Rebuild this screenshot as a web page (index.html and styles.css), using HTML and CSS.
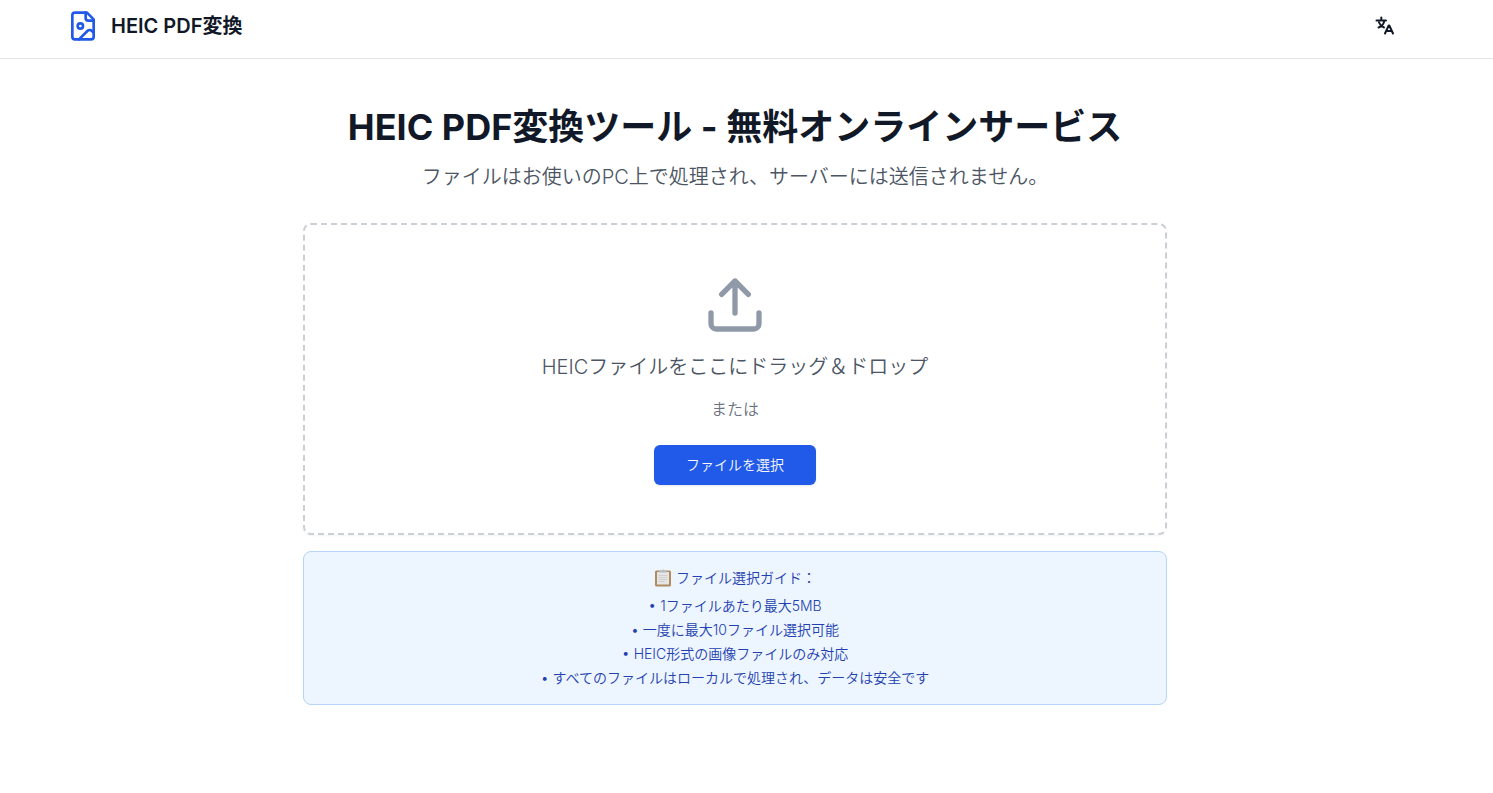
FILE: index.html
```
<!DOCTYPE html>
<html lang="ja">
<head>
    <meta charset="UTF-8">
    <meta name="viewport" content="width=device-width, initial-scale=1.0">
    <title>HEIC PDF変換</title>
    <link rel="stylesheet" href="styles.css">
</head>
<body>
    <header class="site-header">
        <div class="header-inner">
            <a class="brand" href="#">
                <svg class="brand-icon" viewBox="0 0 24 24" aria-hidden="true">
                    <path d="M15 2H6a2 2 0 0 0-2 2v16a2 2 0 0 0 2 2h12a2 2 0 0 0 2-2V7Z"/>
                    <path d="M14 2v4a2 2 0 0 0 2 2h4"/>
                    <circle cx="10" cy="12" r="2"/>
                    <path d="m20 17-1.296-1.296a2.41 2.41 0 0 0-3.408 0L9 22"/>
                </svg>
                <span>HEIC PDF変換</span>
            </a>
            <button class="lang-button" type="button" aria-label="言語">
                <svg class="lang-icon" viewBox="0 0 20 20" aria-hidden="true">
                    <path d="M1.500 4.500h9.500M6.300 1.500v1.400M3.500 11.500c3-1 4.800-3 5.500-5.500M4 6.500c1 2.500 3 4.200 5 5"/>
                    <path d="m10 17.500 3.700-8h.6l3.700 8M11.500 15h5"/>
                </svg>
            </button>
        </div>
    </header>

    <main class="content">
        <h1>HEIC PDF変換ツール - 無料オンラインサービス</h1>
        <p class="subtitle">ファイルはお使いのPC上で処理され、サーバーには送信されません。</p>

        <section class="dropzone">
            <svg class="upload-icon" viewBox="0 0 24 24" aria-hidden="true">
                <path d="M21 15v4a2 2 0 0 1-2 2H5a2 2 0 0 1-2-2v-4"/>
                <path d="m17 8-5-5-5 5M12 3v12"/>
            </svg>
            <p class="drop-text">HEICファイルをここにドラッグ＆ドロップ</p>
            <p class="drop-or">または</p>
            <button class="select-button" type="button">ファイルを選択</button>
        </section>

        <section class="guide">
            <h2>
                <svg class="clipboard-icon" viewBox="0 0 18 18" aria-hidden="true">
                    <rect x="1" y="1.500" width="16" height="16" rx="1.500" fill="#b08a60"/>
                    <rect x="3" y="3" width="12" height="12.500" fill="#e6e6e4"/>
                    <path d="M5 6.500h8M5 8.500h8M5 10.500h8M5 12.500h5" stroke="#cfcfcf"/>
                    <path d="M5 3.500V2h2.500a1.500 1.500 0 0 1 3 0H13v1.500z" fill="#b4bcc4"/>
                </svg>
                ファイル選択ガイド：
            </h2>
            <ul>
                <li>• 1ファイルあたり最大5MB</li>
                <li>• 一度に最大10ファイル選択可能</li>
                <li>• HEIC形式の画像ファイルのみ対応</li>
                <li>• すべてのファイルはローカルで処理され、データは安全です</li>
            </ul>
        </section>
    </main>
</body>
</html>
```
FILE: styles.css
```
* {
    box-sizing: border-box;
}

body {
    margin: 0;
    font-family: Inter, "Noto Sans CJK JP", sans-serif;
    font-weight: 350;
    background-color: #fff;
    color: #111827;
}

h1, h2, p, ul {
    margin: 0;
    padding: 0;
}

button {
    border: none;
    font-family: inherit;
    font-weight: inherit;
    cursor: pointer;
}

svg {
    fill: none;
    stroke-linecap: round;
    stroke-linejoin: round;
}

.site-header {
    padding-right: 23px;
    border-bottom: 1px solid #e5e7eb;
}
.header-inner {
    display: flex;
    align-items: center;
    justify-content: space-between;
    max-width: 1400px;
    margin: 0 auto;
    padding: 8px 32px 14px;
}
.brand {
    display: flex;
    align-items: center;
    gap: 12px;
    color: inherit;
    font-size: 20px;
    font-weight: 600;
    line-height: 28px;
    text-decoration: none;
}
.brand-icon {
    width: 32px;
    height: 32px;
    stroke: #2159e8;
    stroke-width: 2;
}
.lang-button {
    display: flex;
    align-items: center;
    justify-content: center;
    width: 36px;
    height: 36px;
    padding: 0;
    background: none;
}
.lang-icon {
    width: 20px;
    height: 20px;
    stroke: #111827;
    stroke-width: 2;
}

.content {
    max-width: 919px;
    margin: 0 auto;
    padding: 48px 39px 48px 16px;
    text-align: center;
}
.content h1 {
    font-size: 36px;
    font-weight: 700;
    line-height: 40px;
}
.subtitle {
    margin-top: 16px;
    margin-bottom: 32px;
    color: #4b5563;
    font-size: 20px;
    line-height: 28px;
}

.dropzone {
    display: flex;
    flex-direction: column;
    align-items: center;
    padding: 48px;
    border: 2px dashed #cbcfd6;
    border-radius: 8px;
    box-shadow: 0 1px 2px rgba(0, 0, 0, 0.05);
}
.upload-icon {
    width: 64px;
    height: 64px;
    stroke: #9099a8;
    stroke-width: 2;
}
.drop-text {
    margin: 16px 0;
    color: #4b5563;
    font-size: 20px;
    line-height: 28px;
}
.drop-or {
    margin-bottom: 24px;
    color: #6b7280;
    font-size: 16px;
    line-height: 24px;
}
.select-button {
    height: 40px;
    padding: 0 32px;
    border-radius: 6px;
    background-color: #2159e8;
    color: #f8fafc;
    font-size: 14px;
    line-height: 20px;
    box-shadow: 0 1px 2px rgba(0, 0, 0, 0.1);
}

.guide {
    margin-top: 16px;
    padding: 16px;
    border: 1px solid #b5d5fb;
    border-radius: 8px;
    background-color: #edf5ff;
    color: #2240b0;
    font-size: 14px;
    line-height: 20px;
}
.guide h2 {
    display: flex;
    align-items: center;
    justify-content: center;
    gap: 4px;
    margin-bottom: 8px;
    font-size: 14px;
    font-weight: inherit;
}
.clipboard-icon {
    width: 18px;
    height: 18px;
}
.guide ul {
    display: flex;
    flex-direction: column;
    gap: 4px;
    list-style: none;
}
```
